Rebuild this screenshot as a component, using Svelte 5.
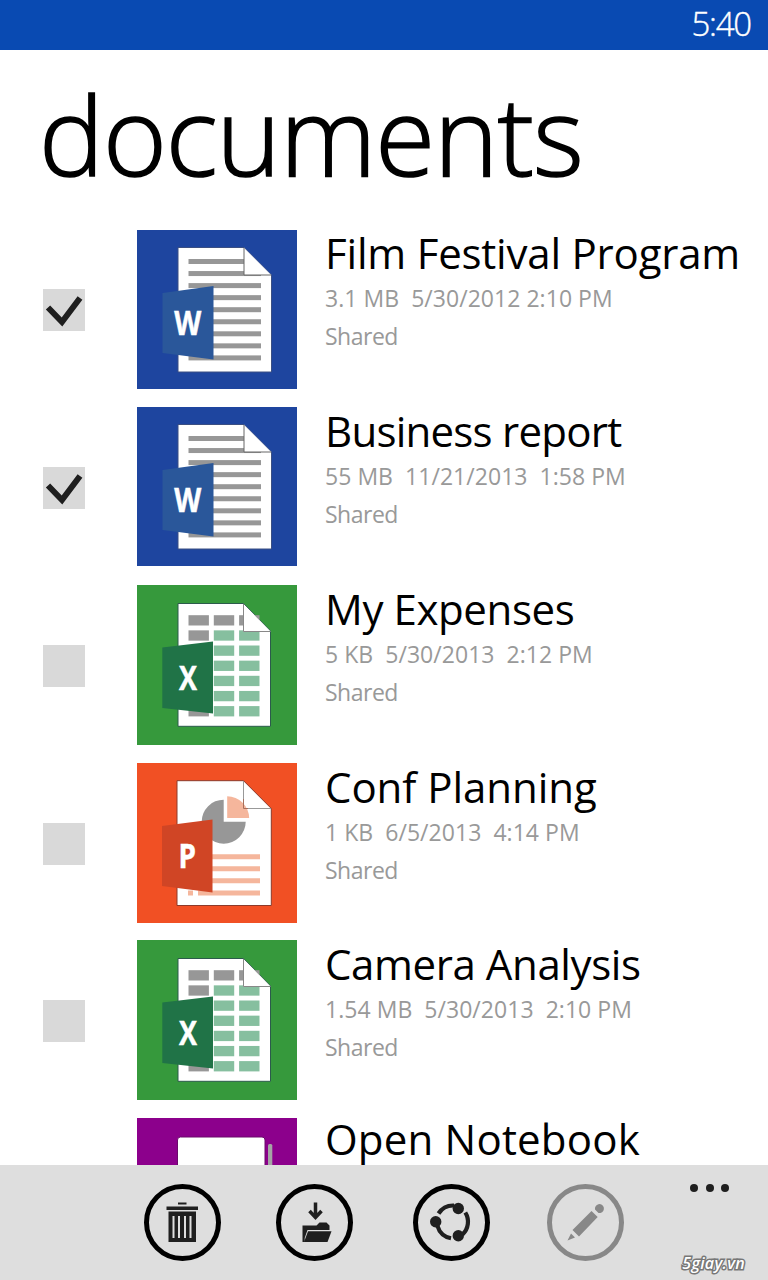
<script lang="ts">
	type Kind = 'word' | 'excel' | 'powerpoint' | 'onenote'

	interface Doc {
		title: string
		tracking: number
		meta: string
		kind: Kind
		checked?: boolean
	}

	let docs: Doc[] = $state([
		{ title: 'Film Festival Program', tracking: -0.2, meta: '3.1 MB  5/30/2012 2:10 PM', kind: 'word', checked: true },
		{ title: 'Business report', tracking: -0.75, meta: '55 MB  11/21/2013  1:58 PM', kind: 'word', checked: true },
		{ title: 'My Expenses', tracking: -0.4, meta: '5 KB  5/30/2013  2:12 PM', kind: 'excel', checked: false },
		{ title: 'Conf Planning', tracking: -0.05, meta: '1 KB  6/5/2013  4:14 PM', kind: 'powerpoint', checked: false },
		{ title: 'Camera Analysis', tracking: -0.4, meta: '1.54 MB  5/30/2013  2:10 PM', kind: 'excel', checked: false },
		{ title: 'Open Notebook', tracking: 0.2, meta: '', kind: 'onenote' }
	])

	const lines = [0, 1, 2, 3, 4, 5, 6, 7, 8]
	const cells = [0, 1, 2, 3, 4, 5, 6].flatMap((row) => [0, 1, 2].map((col) => ({ row, col })))
	// the top-left corner block of the sheet is grey, the rest green
	const isHeader = (row: number, col: number) => row === 0 || col === 0
</script>

<!-- MARKUP -------------------------------------------- -->
{#snippet tile(kind: Kind)}
	<svg class={['tile', kind]} viewBox="0 0 160 160" preserveAspectRatio="xMinYMin slice">
		{#if kind === 'word'}
			<path d="M41 17.5H107L134.5 45V142H41Z" fill="#fff" stroke="#3b4f82" />
			{#each lines as i}
				<rect x="51.5" y={29 + i * 12.05} width={i === 0 ? 56 : 72.5} height="5" fill="#979797" />
			{/each}
			<path d="M107 18V45H134Z" fill="#fff" />
			<path d="M107 18V45H134" fill="none" stroke="#666" />
			<path d="M25.5 63L76.5 56V129.5L25.5 123Z" fill="#2a579a" />
			<text x="37.3" y="105" textLength="27" lengthAdjust="spacingAndGlyphs">W</text>
		{:else if kind === 'excel'}
			<path d="M41 18.5H106.5L133.5 46V141.3H41Z" fill="#fff" stroke="#2c5b4c" />
			{#each cells as { row, col }}
				<rect
					x={51.5 + col * 25.3}
					y={30.2 + row * 15.15}
					width="20.4"
					height="10.3"
					fill={isHeader(row, col) ? '#979797' : '#86bf9f'}
				/>
			{/each}
			<path d="M106.5 19V46.5H133.5Z" fill="#fff" />
			<path d="M106.5 19V46.5H133.5" fill="none" stroke="#888" />
			<path d="M25.3 62.5L76 56.5V128.5L25.3 123Z" fill="#207347" />
			<text x="42" y="105" textLength="18" lengthAdjust="spacingAndGlyphs">X</text>
		{:else if kind === 'powerpoint'}
			<path d="M40 17.7H106.5L134.3 45.5V142.5H40Z" fill="#fff" stroke="#8d3a2a" />
			<path d="M106.5 18V45.5H134" fill="none" stroke="#999" />
			<path d="M86.7 36.7V58.7H108.7A22 22 0 1 1 86.7 36.7Z" fill="#979797" />
			<path d="M90.2 33.3A22 22 0 0 1 112.2 55H90.2Z" fill="#f5b69c" />
			<path d="M106.5 36V45.5H111" fill="none" stroke="#a8705c" />
			<path d="M61 91.3h62v5h-62zM61 103.3h62v5h-62zM61 115.3h62v5h-62zM61 127.5h62v5h-62zM51 127.5h5v5h-5z" fill="#f5b69c" />
			<path d="M25 63L75.5 56.5V129.5L25 123Z" fill="#d04525" />
			<text x="41.5" y="105" textLength="17.5" lengthAdjust="spacingAndGlyphs">P</text>
		{:else}
			<rect x="40.5" y="19" width="87.5" height="123" rx="3" fill="#fff" stroke="#6a0a6b" />
			<rect x="131" y="26" width="4.3" height="30" rx="1.5" fill="#a5a5a5" />
		{/if}
	</svg>
{/snippet}

<div class="screen">
	<header class="status">5:40</header>

	<main>
		<h1>documents</h1>

		<ul class="list">
			{#each docs as doc}
				<li>
					{#if doc.checked !== undefined}
						<label class="check">
							<input type="checkbox" bind:checked={doc.checked} aria-label={doc.title} />
							{#if doc.checked}
								<svg viewBox="0 0 42 42">
									<path d="M5 18.5L19 33L37 9" />
								</svg>
							{/if}
						</label>
					{:else}
						<span></span>
					{/if}
					{@render tile(doc.kind)}
					<div class="info">
						<h2 style:letter-spacing="{doc.tracking}px">{doc.title}</h2>
						{#if doc.meta}
							<p>{doc.meta}</p>
							<p class="shared">Shared</p>
						{/if}
					</div>
				</li>
			{/each}
		</ul>
	</main>

	<footer class="appbar">
		<button aria-label="delete">
			<svg viewBox="0 0 77 77">
				<circle cx="38.5" cy="38.5" r="36" />
				<path class="solid" d="M34 18.5h8.5v2h-8.5zM22.5 22.5h31.5v3.5H22.5z" />
				<path class="solid" fill-rule="evenodd" d="M24.5 27.5h27.5v30.5H24.5zM28.500 32v22h2V32zM34 32v22h2V32zM40 32v22h2V32zM45.5 32v22h2V32z" />
			</svg>
		</button>
		<button aria-label="save">
			<svg viewBox="0 0 77 77">
				<circle cx="38.5" cy="38.5" r="36" />
				<path class="line" d="M39.5 18.5V33M33.5 27L39.5 33.5L45.5 27" />
				<path class="solid" d="M26.5 41.5H40.5L43.5 38.5H50.5L53.5 41.5V46H31.5L28.7 54V58H26.5Z" />
				<path class="solid" d="M32 47.2H55.5L51.5 58H28Z" />
			</svg>
		</button>
		<button aria-label="share">
			<svg viewBox="0 0 77 77">
				<circle cx="38.5" cy="38.5" r="36" />
				<path class="line arc" d="M25.5 29.5A17.5 17.5 0 0 1 41 21.5M52.3 28.5A17.5 17.5 0 0 1 49.500 50.500M38 54.3A17.5 17.5 0 0 1 24.5 42" />
				<g class="solid">
					<circle cx="45.3" cy="24.5" r="5.7" />
					<circle cx="22.7" cy="37.8" r="5.7" />
					<circle cx="45.3" cy="51.7" r="5.7" />
				</g>
			</svg>
		</button>
		<button aria-label="edit" disabled>
			<svg viewBox="0 0 77 77">
				<circle cx="38.5" cy="38.5" r="36" />
				<path class="solid" d="M44.5 27L50.7 33L32 52.5L25.5 46ZM24 49.5L28 53.5L20.5 56.5ZM48 25.5A4.5 4.5 0 1 1 53.5 29L51.5 29Z" />
			</svg>
		</button>
		<button class="more" aria-label="more"><i></i><i></i><i></i></button>
		<span class="mark">5giay.vn</span>
	</footer>
</div>

<!-- CSS ----------------------------------------------- -->
<style>
	:global(body) {
		background-color: #fff;
	}

	.screen {
		width: 768px;
		height: 1280px;
		display: flex;
		flex-direction: column;
		overflow: hidden;
		background-color: #fff;
		color: #000;
		font-family: 'Open Sans', 'Noto Sans', sans-serif;
	}

	/* STATUS ----------------------------------------------- */
	.status {
		height: 50px;
		padding-right: 17px;
		flex: none;
		box-sizing: border-box;
		background-color: #094ab2;
		color: #fff;
		font-size: 33px;
		font-weight: 300;
		line-height: 48px;
		letter-spacing: -1.2px;
		text-align: right;
		-webkit-text-stroke: 0.4px #fff;
	}

	/* LIST ------------------------------------------------- */
	main {
		flex: 1;
		min-height: 0;
		overflow: hidden;
	}

	h1 {
		height: 180px;
		margin: 0;
		padding-left: 39px;
		box-sizing: border-box;
		font-size: 109px;
		font-weight: 300;
		line-height: 168px;
		letter-spacing: -1px;
		white-space: nowrap;
		-webkit-text-stroke: 1.6px #000;
	}

	.list {
		margin: 0;
		padding: 0 0 0 43px;
		display: grid;
		grid-template-rows: 177px 178px 178px 177px 178px 178px;
		list-style: none;
	}

	li {
		display: grid;
		grid-template-columns: 94px 188px 1fr;
		align-items: start;
	}

	.check {
		width: 42px;
		height: 42px;
		margin-top: 60px;
		background-color: #d9d9d9;

		li:first-child & {
			margin-top: 59px;
		}

		input {
			display: none;
		}

		svg {
			display: block;
			fill: none;
			stroke: #1f1f1f;
			stroke-width: 6;
		}
	}

	.tile {
		width: 160px;
		height: 160px;

		&.word {
			height: 159px;
			background-color: #1e459f;
		}
		&.excel {
			background-color: #36993c;
		}
		&.powerpoint {
			background-color: #f15024;
		}
		&.onenote {
			background-color: #8c008c;
		}

		text {
			fill: #fff;
			stroke: #fff;
			stroke-width: 0.5;
			font-size: 34px;
			font-weight: 700;
		}
	}

	.info {
		padding-top: 1px;

		h2 {
			margin: -5px 0 0;
			font-size: 42px;
			font-weight: 400;
			line-height: 56px;
			white-space: nowrap;
		}

		p {
			margin: 0;
			color: #999;
			font-size: 23px;
			letter-spacing: 0.04px;
			line-height: 38px;
			white-space: pre;
		}

		h2 + p {
			margin-top: -2px;
		}

		.shared {
			letter-spacing: -0.5px;
		}

		li:first-child & {
			padding-top: 0;
		}

		li:last-child & {
			margin-top: -3px;
		}
	}

	/* APP BAR ---------------------------------------------- */
	.appbar {
		position: relative;
		height: 115px;
		padding: 19px 0 0 144px;
		flex: none;
		display: flex;
		align-items: flex-start;
		box-sizing: border-box;
		background-color: #dedede;

		button {
			width: 77px;
			height: 77px;
			padding: 0;
			margin-right: 55px;
			background: none;
			border: 0;
			color: #000;

			&:nth-child(2) {
				margin-right: 60px;
			}
			&:nth-child(3) {
				margin-right: 57px;
			}
			&:disabled {
				margin-right: 66px;
				color: #888;
			}
		}

		svg {
			display: block;
			fill: none;
			stroke: currentColor;
			stroke-width: 5;
		}

		.solid {
			fill: #1f1f1f;
			stroke: none;
			button:disabled & {
				fill: #888;
			}
		}

		.line {
			stroke: #1f1f1f;
			stroke-width: 3.5;
		}

		.arc {
			stroke-width: 4.2;
		}

		.more {
			width: 39px;
			height: 8px;
			margin: 0;
			display: flex;
			justify-content: space-between;

			i {
				width: 8px;
				height: 8px;
				background-color: #1f1f1f;
				border-radius: 50%;
			}
		}
	}

	.mark {
		position: absolute;
		right: 23px;
		bottom: 7px;
		color: #fff;
		font-size: 16px;
		font-style: italic;
		font-weight: 600;
		letter-spacing: 0.3px;
		line-height: 20px;
		paint-order: stroke fill;
		-webkit-text-stroke: 3px #777;
	}
</style>
